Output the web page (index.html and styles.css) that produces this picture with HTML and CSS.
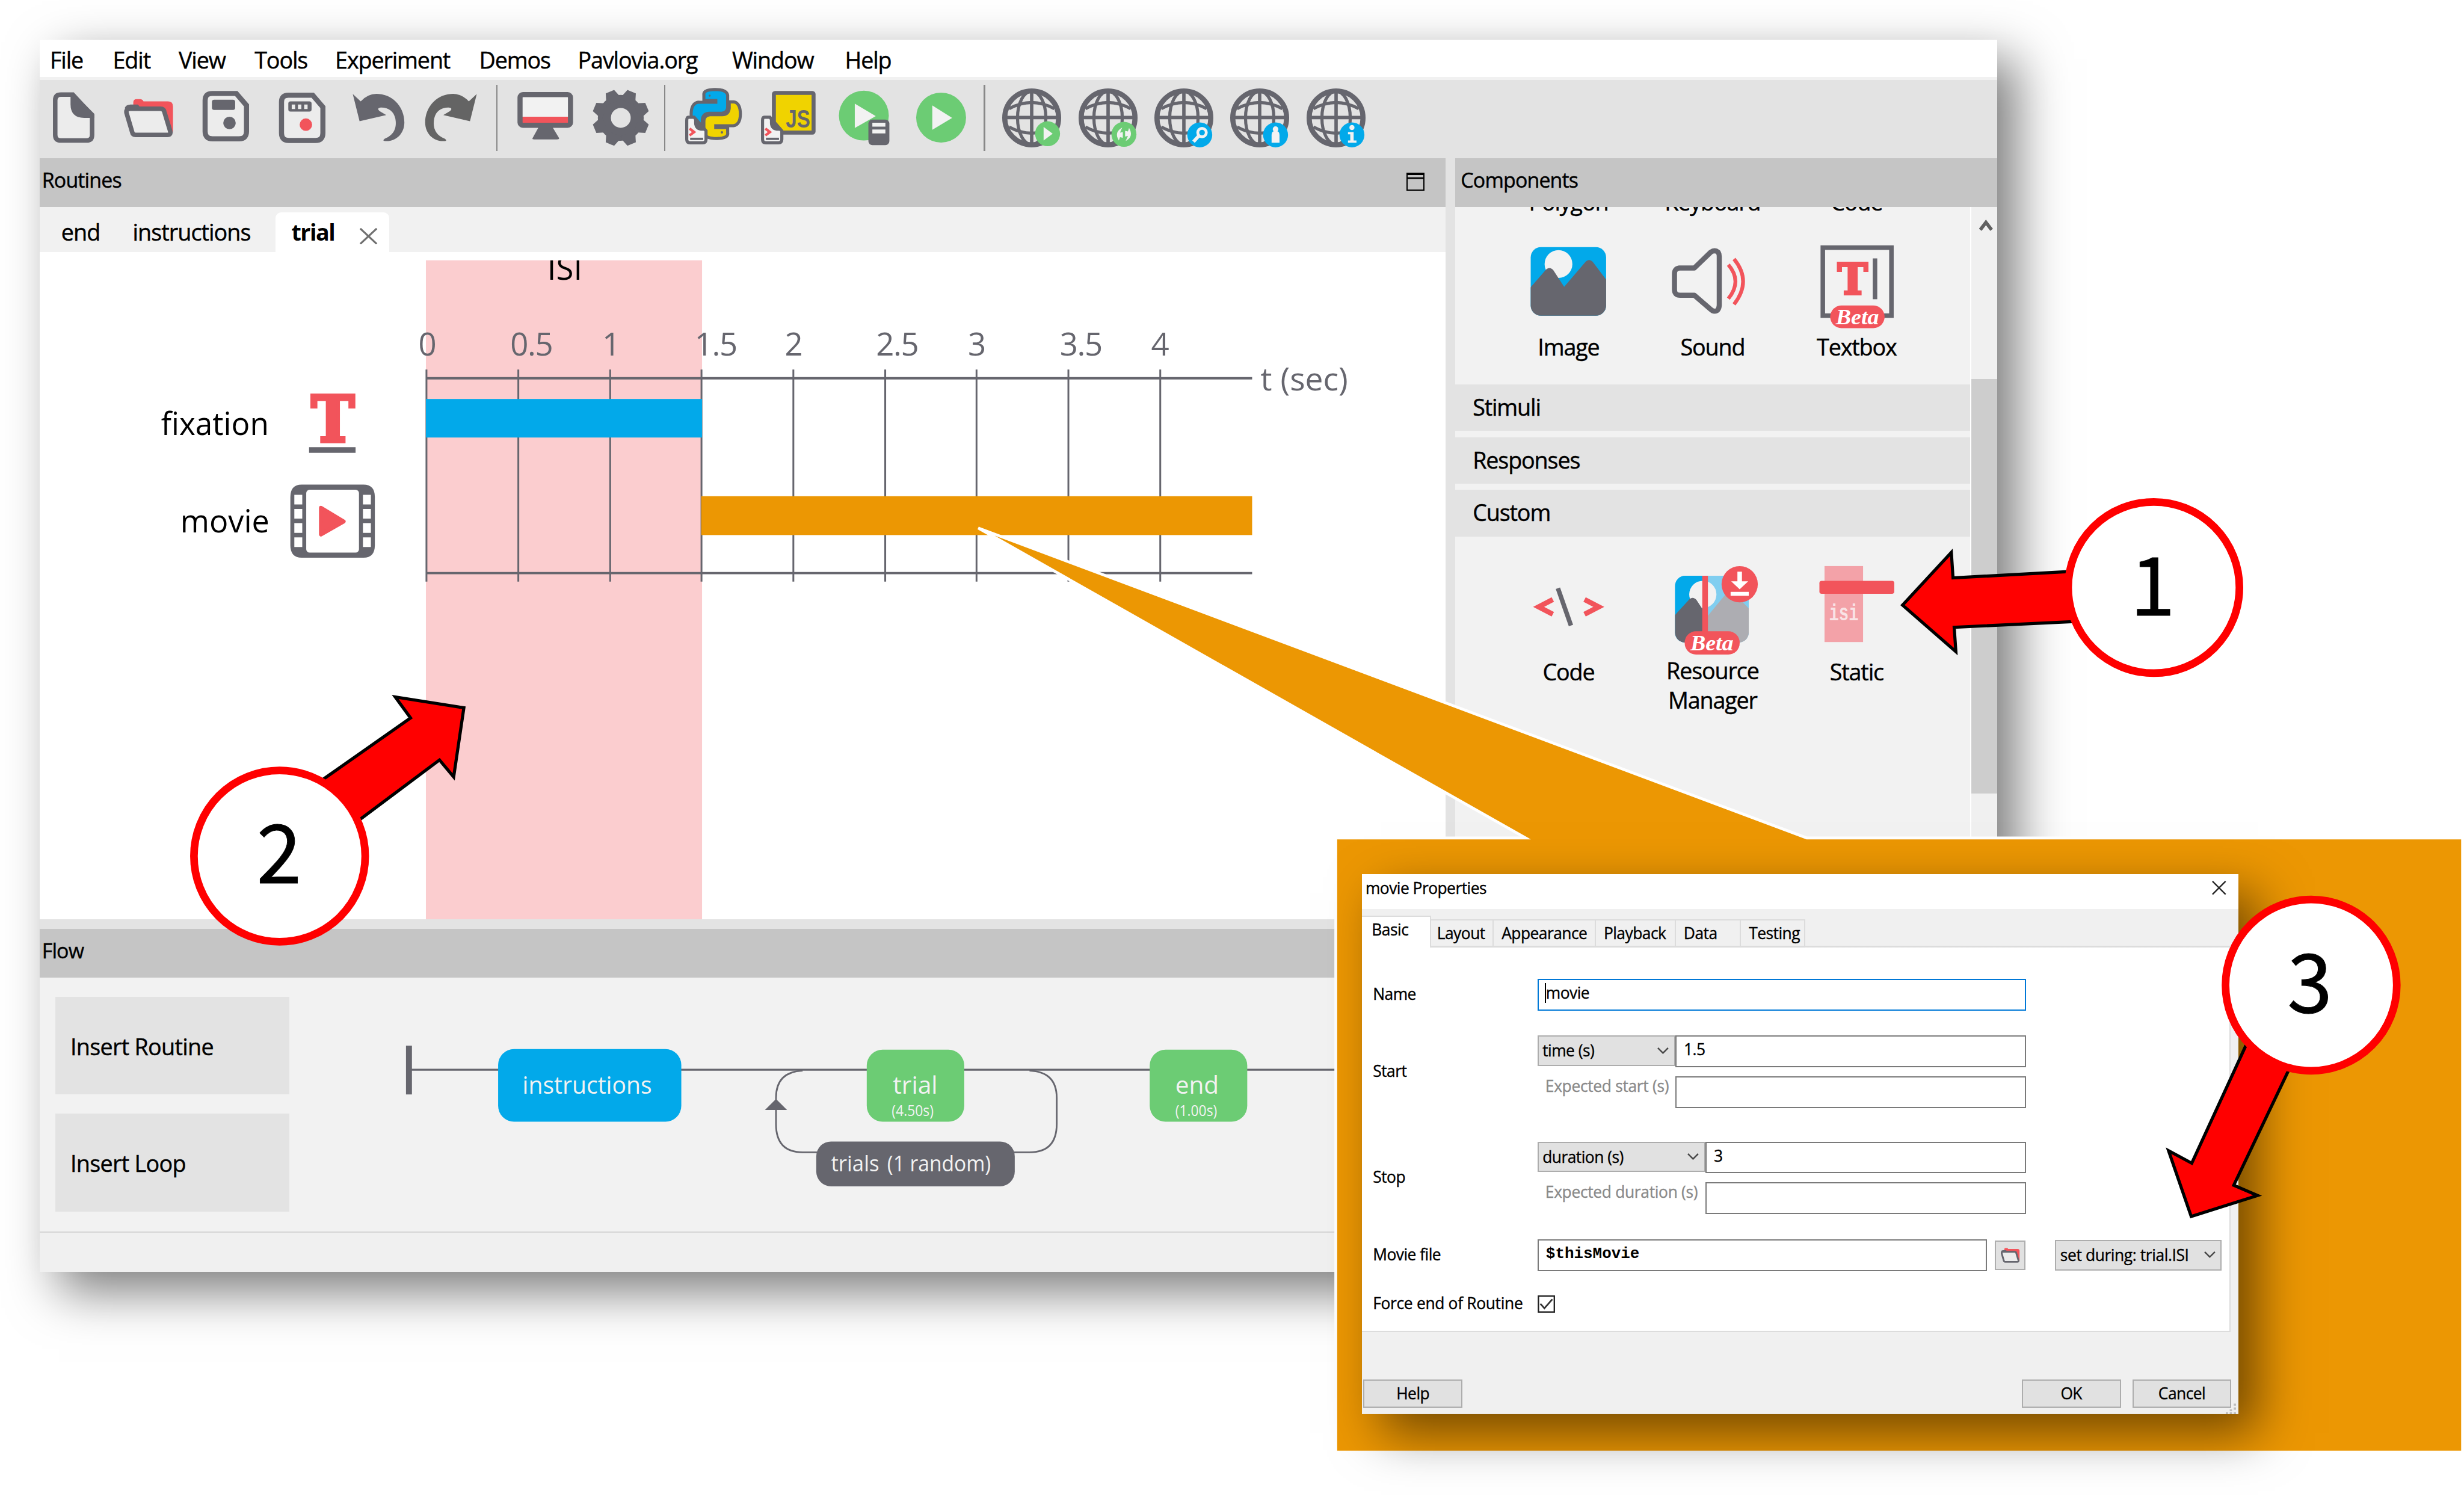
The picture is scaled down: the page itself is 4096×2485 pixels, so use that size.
FILE: index.html
```html
<!DOCTYPE html>
<html lang="en">
<head>
<meta charset="utf-8">
<title>Builder - static period</title>
<link rel="stylesheet" href="styles.css">
</head>
<body>
<svg class="defs" width="0" height="0" aria-hidden="true">
  <defs>
    <path id="snake" d="M14.25.18l.9.2.73.26.59.3.45.32.34.34.25.34.16.33.1.3.04.26.02.2-.01.13V8.5l-.05.63-.13.55-.21.46-.26.38-.3.31-.33.25-.35.19-.35.14-.33.1-.3.07-.26.04-.21.02H8.77l-.69.05-.59.14-.5.22-.41.27-.33.32-.27.35-.2.36-.15.37-.1.35-.07.32-.04.27-.02.21v3.06H3.17l-.21-.03-.28-.07-.32-.12-.35-.18-.36-.26-.36-.36-.35-.46-.32-.59-.28-.73-.21-.88-.14-1.05-.05-1.23.06-1.22.16-1.04.24-.87.32-.71.36-.57.4-.44.42-.33.42-.24.4-.16.36-.1.32-.05.24-.01h.16l.06.01h8.16v-.83H6.18l-.01-2.75-.02-.37.05-.34.11-.31.17-.28.25-.26.31-.23.38-.2.44-.18.51-.15.58-.12.64-.1.71-.06.77-.04.84-.02 1.27.05z"/>
    <g id="script-doc">
      <path d="M10 53H20L41 77V92Q41 98 35 98H13Q7 98 7 92V59Q7 53 10 53Z" fill="#f2f2f2" stroke="#66666e" stroke-width="5.500"/>
      <path d="M20 52L43 76Q20 80 20 62Z" fill="#66666e"/>
      <path d="M12 73L20 79L12 85" fill="none" stroke="#f2545b" stroke-width="4.500"/>
      <path d="M13 91H36" stroke="#66666e" stroke-width="4"/>
    </g>
    <g id="globe" fill="none" stroke="#66666e">
      <circle cx="52" cy="54" r="47.500" stroke-width="9"/>
      <ellipse cx="52" cy="54" rx="25" ry="47" stroke-width="5.500"/>
      <path d="M52 8V100M5 53.500H99" stroke-width="6"/>
      <path d="M12 38Q52 16 92 38M12 70Q52 92 92 70" stroke-width="5.500"/>
    </g>
    <g id="folder">
      <path d="M25 40V27Q25 21 31 21H37Q41 21 43 25H86Q95 25 95 34V80L80 50Z" fill="#f2545b"/>
      <path d="M19 38H73Q79 38 80 44L90 77Q92 84 85 84H29Q24 84 23 79L13 45Q12 38 19 38Z" fill="#ececec" stroke="#66666e" stroke-width="8"/>
      <path d="M12 38Q14 33 20 33H32L36 38H74" fill="none" stroke="#66666e" stroke-width="5"/>
    </g>
    <g id="tooth"><path d="M-15-30L-8-50H8L15-30Z"/></g>
  </defs>
</svg>

<div class="stage">
  <main class="builder">
    <nav class="menubar">
      <span>File</span><span>Edit</span><span>View</span><span>Tools</span><span>Experiment</span><span>Demos</span><span>Pavlovia.org</span><span>Window</span><span>Help</span>
    </nav>
    <div class="toolbar">
      <svg class="tool" viewBox="0 0 108 108"><path d="M31 13H52L86 50V84Q86 94 76 94H31Q21 94 21 84V23Q21 13 31 13Z" fill="#ececec" stroke="#66666e" stroke-width="8"/><path d="M48 11H54L90 47V54H72Q48 54 48 30Z" fill="#66666e"/></svg>
      <svg class="tool" viewBox="0 0 108 108"><use href="#folder"/></svg>
      <svg class="tool" viewBox="0 0 108 108"><path d="M30 11H73L91 32V78Q91 91 78 91H31Q18 91 18 78V23Q18 11 30 11Z" fill="#ececec" stroke="#66666e" stroke-width="9"/><rect x="30" y="22" width="41" height="18" rx="4" fill="#66666e"/><circle cx="61" cy="63" r="11" fill="#66666e"/></svg>
      <svg class="tool" viewBox="0 0 108 108"><path d="M30 14H73L91 35V81Q91 94 78 94H31Q18 94 18 81V26Q18 14 30 14Z" fill="#ececec" stroke="#66666e" stroke-width="9"/><rect x="30" y="25" width="41" height="18" rx="4" fill="#66666e"/><path d="M36 34.500H42M47 34.500H53M58 34.500H64" stroke="#ececec" stroke-width="8"/><circle cx="61" cy="66" r="11" fill="#f2545b"/></svg>
      <svg class="tool" viewBox="0 0 108 108"><path d="M10 12L24 25Q38 10 56 12C84 14 101 38 101 62C101 82 86 96 68 95Q61 95 66 91C84 84 88 70 85 55C82 42 72 35 58 36Q52 37 57 42L69 49L22 60Z" fill="#66666e"/></svg>
      <svg class="tool" viewBox="0 0 108 108"><g transform="translate(105) scale(-1 1)"><path d="M10 12L24 25Q38 10 56 12C84 14 101 38 101 62C101 82 86 96 68 95Q61 95 66 91C84 84 88 70 85 55C82 42 72 35 58 36Q52 37 57 42L69 49L22 60Z" fill="#646464"/></g></svg>
      <span class="rule"></span>
      <svg class="tool" viewBox="0 0 108 108"><rect x="9" y="13" width="89" height="54" rx="5" fill="#f2f2f2"/><rect x="12" y="52" width="83" height="12" fill="#f2545b"/><rect x="9" y="13" width="89" height="54" rx="5" fill="none" stroke="#66666e" stroke-width="9"/><path d="M42 70H66L78 90Q78 92 74 92H34Q30 92 31 90Z" fill="#66666e"/></svg>
      <svg class="tool" viewBox="0 0 108 108"><g transform="translate(53 54)" fill="#66666e"><circle r="29" fill="none" stroke="#66666e" stroke-width="23"/><use href="#tooth" transform="rotate(22.500)"/><use href="#tooth" transform="rotate(67.500)"/><use href="#tooth" transform="rotate(112.500)"/><use href="#tooth" transform="rotate(157.500)"/><use href="#tooth" transform="rotate(202.500)"/><use href="#tooth" transform="rotate(247.500)"/><use href="#tooth" transform="rotate(292.500)"/><use href="#tooth" transform="rotate(337.500)"/></g></svg>
      <span class="rule"></span>
      <svg class="tool" viewBox="0 0 108 108"><g transform="translate(15 4) scale(3.600)" stroke="#66666e" stroke-width="1.500"><use href="#snake" fill="#f0d300" transform="rotate(180 12 12)"/><use href="#snake" fill="#02a9ea"/><path d="M8 6H12.500M16 18H11.500" stroke-width="1"/><circle cx="9" cy="3" r=".5" fill="#66666e" stroke="none"/><circle cx="15" cy="21" r=".6" fill="#66666e" stroke="none"/></g><use href="#script-doc"/></svg>
      <svg class="tool" viewBox="0 0 108 108"><rect x="27" y="10" width="70" height="70" rx="2" fill="#f0d300" stroke="#66666e" stroke-width="7"/><text x="48" y="71" class="js" textLength="43" lengthAdjust="spacingAndGlyphs">JS</text><use href="#script-doc"/></svg>
      <svg class="tool" viewBox="0 0 108 108"><circle cx="52" cy="50" r="44" fill="#6ccc74"/><path d="M36 29L73 51L36 72Z" fill="#f2f2f2"/><rect x="60" y="57" width="37" height="45" rx="7" fill="#66666e"/><path d="M67 66H90M67 78H90" stroke="#f2f2f2" stroke-width="7"/></svg>
      <svg class="tool" viewBox="0 0 108 108"><circle cx="53.500" cy="53.500" r="44" fill="#6ccc74"/><path d="M38 32L73 54L38 75Z" fill="#f2f2f2"/></svg>
      <span class="rule"></span>
      <svg class="tool" viewBox="0 0 108 108"><use href="#globe"/><circle cx="80" cy="82" r="22" fill="#6ccc74"/><path d="M73 70L89 82L73 94Z" fill="#f2f2f2"/></svg>
      <svg class="tool" viewBox="0 0 108 108"><use href="#globe"/><circle cx="80" cy="83" r="22" fill="#6ccc74"/><path d="M77 71Q62 79 71 94L73 88L78 89V79L73 80ZM83 95Q98 87 89 72L87 78L82 77V87L87 86Z" fill="#f2f2f2"/></svg>
      <svg class="tool" viewBox="0 0 108 108"><use href="#globe"/><circle cx="80" cy="84" r="22" fill="#02a9ea"/><circle cx="84" cy="80" r="7.500" fill="none" stroke="#f2f2f2" stroke-width="5"/><path d="M79 85L69 96" stroke="#f2f2f2" stroke-width="6"/></svg>
      <svg class="tool" viewBox="0 0 108 108"><use href="#globe"/><circle cx="80" cy="84" r="22" fill="#02a9ea"/><circle cx="80" cy="74" r="5" fill="#f2f2f2"/><path d="M73 98V84Q73 77 80 77T87 84V98Z" fill="#f2f2f2"/></svg>
      <svg class="tool" viewBox="0 0 108 108"><use href="#globe"/><circle cx="80" cy="84" r="22" fill="#02a9ea"/><circle cx="80" cy="71" r="4.500" fill="#f2f2f2"/><path d="M73 79H83V94H88V98H73V94H77V83H73Z" fill="#f2f2f2"/></svg>
    </div>

    <div class="workspace">
      <div class="left">
        <section class="routines">
          <header class="panel-title"><span>Routines</span><i class="maximize"></i></header>
          <div class="tabs">
            <span class="tab">end</span><span class="tab">instructions</span>
            <span class="tab active">trial<svg class="close" viewBox="0 0 34 30"><path d="M2 1L32 29M32 1L2 29" fill="none" stroke="#707070" stroke-width="3.500"/></svg></span>
          </div>
          <svg class="timeline" viewBox="70 444 2479 1177">
            <clipPath id="canvas-clip"><rect x="70" y="458.500" width="2479" height="1163"/></clipPath>
            <rect x="751" y="458.500" width="487" height="1163" fill="#fbcdcf"/>
            <g clip-path="url(#canvas-clip)"><text x="965" y="493" class="big" textLength="62" lengthAdjust="spacingAndGlyphs">ISI</text></g>
            <g class="axis">
              <path d="M752 651V1025M914 651V1025M1076 651V1025M1237 651V1025M1399 651V1025M1561 651V1025M1722 651V1025M1884 651V1025M2046 651V1025" stroke-width="3.200"/>
              <path d="M752 666.500H2208M752 1010H2208" stroke-width="4"/>
            </g>
            <rect x="751" y="703" width="487" height="68" fill="#02a9ea"/>
            <rect x="1236.500" y="874.500" width="971.500" height="68.500" fill="#ec9703"/>
            <g class="big ticks">
              <text x="753" y="626">0</text><text x="937" y="626">0.5</text><text x="1077" y="626">1</text><text x="1262" y="626">1.5</text><text x="1399" y="626">2</text><text x="1582" y="626">2.5</text><text x="1722" y="626">3</text><text x="1906" y="626">3.5</text><text x="2045" y="626">4</text>
            </g>
            <text x="2223" y="688" class="big unit" textLength="154" lengthAdjust="spacingAndGlyphs">t (sec)</text>
            <text x="284" y="767" class="big" textLength="190" lengthAdjust="spacingAndGlyphs">fixation</text>
            <text x="318" y="938" class="big" textLength="157" lengthAdjust="spacingAndGlyphs">movie</text>
            <text x="549" y="778" class="slab" font-size="111" stroke-width="6" textLength="76" lengthAdjust="spacingAndGlyphs">T</text>
            <rect x="545" y="788" width="82" height="10" fill="#66666e"/>
            <path d="M532 854H641Q661 854 661 876V961Q661 983 641 983H532Q512 983 512 961V876Q512 854 532 854Z" fill="#66666e"/>
            <rect x="540" y="863" width="93" height="111" rx="6" fill="#fff"/>
            <path d="M519 872H533V889H519ZM519 897H533V914H519ZM519 922H533V939H519ZM519 947H533V964H519ZM640 872H654V889H640ZM640 897H654V914H640ZM640 922H654V939H640ZM640 947H654V964H640Z" fill="#fff"/>
            <path d="M566 895L606 919L566 942Z" fill="#f2545b" stroke="#f2545b" stroke-width="7" stroke-linejoin="round"/>
          </svg>
        </section>
        <section class="flow">
          <header class="panel-title"><span>Flow</span></header>
          <div class="flow-body">
            <div class="flow-buttons"><button class="insert">Insert Routine</button><button class="insert">Insert Loop</button></div>
            <svg class="flow-chart" viewBox="600 1724 1900 447">
              <g fill="none" stroke="#66666e" stroke-width="3">
                <path d="M720 1886.500H2500" stroke-width="3.500"/>
                <path d="M1415 1888Q1368 1890 1368 1936V1982Q1368 2032 1415 2032H1815Q1863 2032 1863 1982V1936Q1863 1890 1815 1888"/>
              </g>
              <rect x="715.500" y="1844" width="10.500" height="86" fill="#66666e"/>
              <path d="M1368 1938L1387.500 1957.500H1348.500Z" fill="#66666e"/>
              <rect x="878" y="1850" width="323" height="128" rx="28" fill="#02a9ea"/>
              <rect x="1528" y="1851" width="172" height="127" rx="28" fill="#6ccc74"/>
              <rect x="2027" y="1851" width="172" height="127" rx="28" fill="#6ccc74"/>
              <rect x="1439" y="2013" width="350" height="79" rx="26" fill="#66666e"/>
              <g class="node">
                <text x="921" y="1929" textLength="228" lengthAdjust="spacingAndGlyphs">instructions</text>
                <text x="1574" y="1929" textLength="79" lengthAdjust="spacingAndGlyphs">trial</text>
                <text x="2072" y="1929" textLength="77" lengthAdjust="spacingAndGlyphs">end</text>
              </g>
              <g class="secs">
                <text x="1572" y="1968" textLength="74" lengthAdjust="spacingAndGlyphs">(4.50s)</text>
                <text x="2072" y="1968" textLength="74" lengthAdjust="spacingAndGlyphs">(1.00s)</text>
              </g>
              <g class="loop">
                <text x="1465" y="2066" textLength="85" lengthAdjust="spacingAndGlyphs">trials</text>
                <text x="1564" y="2066" textLength="183" lengthAdjust="spacingAndGlyphs">(1 random)</text>
              </g>
            </svg>
          </div>
        </section>
      </div>

      <aside class="components">
        <header class="panel-title"><span>Components</span></header>
        <div class="comp-body">
          <div class="comp-list">
            <div class="palette first">
              <span class="label cut">Polygon</span><span class="label cut">Keyboard</span><span class="label cut">Code</span>
              <div class="item"><svg class="pic" viewBox="0 0 150 150"><clipPath id="img-clip"><rect x="8" y="6" width="133" height="121" rx="18"/></clipPath><g clip-path="url(#img-clip)"><rect width="150" height="150" fill="#02a9ea"/><circle cx="57" cy="36" r="24.500" fill="#f2f2f2"/><path d="M0 86L34 47Q41 39 48 47L67 76L104 33Q111 25 118 33L150 75V150H0Z" fill="#66666e"/></g></svg><span class="label">Image</span></div>
              <div class="item"><svg class="pic" viewBox="0 0 150 150"><path d="M16 44H43L72 16Q79 11 85 16Q87 19 87 24V108Q87 116 83 119Q77 122 72 117L43 92H18Q8 92 8 82V54Q8 44 18 44Z" fill="none" stroke="#66666e" stroke-width="9" stroke-linejoin="round" transform="translate(0 -1)"/><path d="M103 37Q128 66 103 97M113 27Q145 66 113 107" fill="none" stroke="#f2545b" stroke-width="6.500"/></svg><span class="label">Sound</span></div>
              <div class="item"><svg class="pic" viewBox="0 0 150 150"><rect x="15" y="7" width="121" height="120" fill="none" stroke="#66666e" stroke-width="8"/><text x="41" y="89" class="slab" font-size="75" stroke-width="4.500" textLength="53" lengthAdjust="spacingAndGlyphs">T</text><path d="M107 26V98" stroke="#66666e" stroke-width="8"/><rect x="28" y="109" width="96" height="40" rx="20" fill="#f2545b"/><text x="38" y="142" class="beta" textLength="76" lengthAdjust="spacingAndGlyphs">Beta</text></svg><span class="label">Textbox</span></div>
            </div>
            <h2 class="category">Stimuli</h2>
            <h2 class="category">Responses</h2>
            <h2 class="category">Custom</h2>
            <div class="palette custom">
              <div class="item"><svg class="pic tall" viewBox="0 0 150 160"><path d="M47 61L22 74L47 87M103 61L128 74L103 87" fill="none" stroke="#f2545b" stroke-width="9"/><path d="M56 41L79 107" stroke="#66666e" stroke-width="8"/></svg><span class="label single">Code</span></div>
              <div class="item"><svg class="pic tall" viewBox="0 0 150 160"><clipPath id="res-clip"><rect x="9" y="19" width="130" height="118" rx="18"/></clipPath><g clip-path="url(#res-clip)"><rect width="150" height="160" fill="#80cef0"/><rect width="60" height="160" fill="#02a9ea"/><circle cx="58" cy="52" r="24" fill="#f2f2f2"/><path d="M60 98L98 52Q106 44 114 51L150 88V160H60Z" fill="#adadb2"/><path d="M0 98L33 62Q40 54 47 62L60 82V160H0Z" fill="#66666e"/><rect x="57" y="19" width="10" height="110" fill="#f2545b"/></g><circle cx="123" cy="34" r="32" fill="#f2545b"/><path d="M119 12H127V29H138L123 43L108 29H119Z" fill="#fff"/><path d="M107 51H139" stroke="#fff" stroke-width="7"/><rect x="26" y="117" width="97" height="41" rx="20" fill="#f2545b"/><text x="36" y="151" class="beta" textLength="76" lengthAdjust="spacingAndGlyphs">Beta</text></svg><span class="label">Resource<br>Manager</span></div>
              <div class="item"><svg class="pic tall" viewBox="0 0 150 160"><rect x="18" y="2" width="68" height="134" fill="#f3a2a8"/><rect x="9" y="28" width="132" height="23" rx="4" fill="#f2545b"/><text x="26" y="98" class="isi" textLength="52" lengthAdjust="spacingAndGlyphs">isi</text></svg><span class="label single">Static</span></div>
            </div>
          </div>
          <div class="scrollbar"><svg viewBox="0 0 24 20"><path d="M2 18L12 5L22 18" fill="none" stroke="#606060" stroke-width="6"/></svg><i class="thumb"></i></div>
        </div>
      </aside>
    </div>
    <footer class="status"></footer>
  </main>

  <svg class="callout" viewBox="0 0 4345 2636">
    <path d="M2355.500 1477.500H2690L1725 931L3186 1477.500H4342.500V2560.500H2355.500Z" fill="#ec9703" stroke="#fff" stroke-width="5" stroke-miterlimit="4"/>
  </svg>

  <section class="dialog">
    <header class="dlg-title"><span>movie Properties</span><svg viewBox="0 0 26 26"><path d="M1 1L25 25M25 1L1 25" stroke="#222" stroke-width="2.500"/></svg></header>
    <div class="dlg-tabs"><span class="current">Basic</span><span>Layout</span><span>Appearance</span><span>Playback</span><span>Data</span><span>Testing</span></div>
    <div class="page">
      <div class="row name"><label>Name</label><div class="field focus"><i class="caret"></i>movie</div></div>
      <div class="row start"><label>Start</label>
        <div class="stack">
          <div class="pair"><div class="combo">time (s)<svg class="chev" viewBox="0 0 20 12"><path d="M1 1L10 10L19 1"/></svg></div><div class="field">1.5</div></div>
          <div class="pair"><span class="hint">Expected start (s)</span><div class="field"></div></div>
        </div>
      </div>
      <div class="row stop"><label>Stop</label>
        <div class="stack">
          <div class="pair"><div class="combo">duration (s)<svg class="chev" viewBox="0 0 20 12"><path d="M1 1L10 10L19 1"/></svg></div><div class="field">3</div></div>
          <div class="pair"><span class="hint">Expected duration (s)</span><div class="field"></div></div>
        </div>
      </div>
      <div class="row file"><label>Movie file</label><div class="file-line"><div class="field code">$thisMovie</div><button class="browse"><svg viewBox="4 14 98 78"><use href="#folder"/></svg></button><div class="combo">set during: trial.ISI<svg class="chev" viewBox="0 0 20 12"><path d="M1 1L10 10L19 1"/></svg></div></div></div>
      <div class="row force"><label>Force end of Routine</label><svg class="check" viewBox="0 0 31 31"><rect x="1.500" y="1.500" width="28" height="28" fill="#fff" stroke="#222" stroke-width="2.500"/><path d="M5 15L12 23L26 7" fill="none" stroke="#333" stroke-width="3"/></svg></div>
    </div>
    <footer class="dlg-foot"><button>Help</button><span class="spacer"></span><button>OK</button><button>Cancel</button></footer>
    <svg class="grip" viewBox="0 0 20 18"><path d="M14 0H18V4H14ZM14 7H18V11H14ZM7 10H11V13H7ZM0 15H4V18H0ZM7 15H11V18H7ZM14 15H18V18H14Z" fill="#bdbdbd"/></svg>
  </section>

  <svg class="notes" viewBox="0 0 4345 2636">
    <g fill="#f00" stroke="#000" stroke-width="5.500" stroke-miterlimit="10">
      <path d="M3700 1005L3444 1019L3441 974L3355 1067L3449 1149L3446 1106L3700 1094Z"/>
      <path d="M540 1395L724 1266L697 1229L818 1248L800 1370L775 1340L600 1471Z"/>
      <path d="M3985 1790L3865 2051L3824 2029L3864 2145L3981 2108L3939 2090L4075 1805Z"/>
    </g>
    <g fill="#fff" stroke="#f00" stroke-width="13.500">
      <circle cx="3798" cy="1036" r="151"/><circle cx="493" cy="1509.500" r="151"/><circle cx="4075.500" cy="1737" r="151"/>
    </g>
    <g class="number"><text x="3796" y="1085">1</text><text x="492" y="1557">2</text><text x="4073" y="1785">3</text></g>
  </svg>
</div>
</body>
</html>
```
FILE: styles.css
```css
* { box-sizing: border-box; }
body { margin: 0; background: #fff; overflow: hidden; }
.defs { position: absolute; }
svg { display: block; flex: none; }
button { font: inherit; letter-spacing: inherit; color: inherit; padding: 0; margin: 0; }

/* Coordinates inside the stage are on a 4345 x 2636 canvas */
.stage {
  position: relative;
  width: 4345px;
  height: 2636px;
  zoom: 0.94269;
  overflow: hidden;
  font-family: "Open Sans", "Noto Sans", sans-serif;
  font-size: 40px;
  letter-spacing: -0.03em;
  color: #000;
  -webkit-text-stroke: 0.5px;
}
.stage svg { -webkit-text-stroke: 0; }

/* Builder window */
.builder {
  position: absolute;
  left: 70px;
  top: 70px;
  width: 3452px;
  height: 2173px;
  display: flex;
  flex-direction: column;
  background: #e3e3e3;
  box-shadow: 34px 34px 84px rgba(0, 0, 0, 0.52);
}
.menubar {
  height: 66px;
  padding: 6px 0 0 18px;
  display: grid;
  grid-template-columns: 111px 116px 134px 142px 254px 174px 272px 199px 200px;
  align-items: center;
  background: #fff;
}
.toolbar {
  height: 143px;
  border-top: 6px solid #f1f1f1;
  padding-left: 6px;
  display: flex;
  gap: 26px;
  align-items: center;
  padding-bottom: 5px;
}
.tool { width: 108px; height: 108px; }
.rule { width: 2.500px; height: 117px; margin: 0 4.500px 0 -5px; background: #888; }
.js { font: bold 45px "Liberation Sans", sans-serif; letter-spacing: 0; fill: #66666e; }

.workspace { display: grid; grid-template-columns: 2479px 956px; gap: 17px; height: 1892px; }
.left { display: flex; flex-direction: column; gap: 17px; }
.panel-title {
  height: 86px;
  padding: 0 37px 10px 4px;
  display: flex;
  justify-content: space-between;
  align-items: center;
  background: #c5c5c5;
  font-size: 36px;
  letter-spacing: -0.025em;
}
.maximize { width: 32px; height: 32px; margin-top: 6px; border: 3px solid #000; border-top-width: 5px; box-shadow: inset 0 4px 0 #c5c5c5, inset 0 7px 0 #000; }
.tabs { height: 79px; display: flex; align-items: flex-end; padding-left: 12px; background: #f1f1f1; }
.tab { height: 69px; padding-left: 26px; line-height: 69px; letter-spacing: -0.025em; }
.tab:first-child { width: 126px; }
.tab:nth-child(2) { width: 278px; }
.tab.active {
  width: 200px;
  padding-left: 28px;
  padding-right: 20px;
  display: flex;
  justify-content: space-between;
  align-items: center;
  background: #fff;
  border-radius: 10px 10px 0 0;
  font-weight: bold;
  letter-spacing: -0.04em;
  -webkit-text-stroke: 0;
}
.close { width: 33px; height: 29px; margin-top: 14px; }
.timeline { width: 2479px; height: 1177px; background: #fff; }
.axis { fill: none; stroke: #66666e; }
.big { font-size: 56px; letter-spacing: 0; }
.ticks { fill: #66666e; text-anchor: middle; letter-spacing: -1.500px; }
.unit { fill: #66666e; }
.slab { font-family: "DejaVu Serif", serif; font-weight: bold; letter-spacing: 0; fill: #f2545b; stroke: #f2545b; }

.flow-body { height: 447px; display: flex; background: #f2f2f2; }
.flow-buttons { display: flex; flex-direction: column; gap: 34px; padding: 34px 90px 0 28px; }
.insert { width: 412px; height: 172px; border: 0; padding: 2px 0 0 26px; text-align: left; background: #e3e3e3; font-size: 40px; letter-spacing: -0.018em; }
.flow-chart { width: 1900px; height: 447px; }
.node { font-size: 42px; letter-spacing: 0; fill: #f2f2f2; }
.secs { font-size: 27px; letter-spacing: 0; fill: #f2f2f2; }
.loop { font-size: 38px; letter-spacing: 0; fill: #f2f2f2; }
.status { height: 72px; border-top: 3px solid #d5d5d5; background: #f0f0f0; }

/* Components panel */
.components .panel-title { padding-left: 10px; }
.comp-body { display: grid; grid-template-columns: 908px 48px; height: 1806px; }
.comp-list { background: #f2f2f2; }
.palette { display: grid; grid-template-columns: repeat(3, 254px); padding-left: 73px; }
.first { height: 313px; overflow: hidden; grid-template-rows: 15px 1fr; }
.item { display: flex; flex-direction: column; align-items: center; }
.label { line-height: 52px; text-align: center; }
.cut { height: 52px; margin-top: -35px; }
.first .item { padding-top: 50px; }
.pic { width: 150px; height: 150px; overflow: visible; }
.first .label { padding-top: 6px; }
.first .cut { padding: 0; }
.tall { height: 160px; }
.single { padding-top: 3px; }
.custom .item { padding-top: 50px; }
.category { height: 82px; margin: 0 0 11px; padding-left: 31px; line-height: 81px; background: #e3e3e3; font-size: 40px; font-weight: normal; }
.category:nth-of-type(3) { margin: 0; }
.beta { font: italic bold 38px "Liberation Serif", serif; letter-spacing: 0; fill: #fff; }
.isi { font: bold 42px "Liberation Mono", monospace; letter-spacing: 0; fill: #f9e3e5; }
.scrollbar { border-left: 3px solid #fff; background: #f0f0f0; }
.scrollbar svg { width: 24px; height: 20px; margin: 22px 0 0 14px; }
.thumb { display: block; height: 731px; margin-top: 261px; background: #cdcdcd; }

.callout, .notes { position: absolute; left: 0; top: 0; width: 4345px; height: 2636px; }

/* Properties dialog */
.dialog {
  position: absolute;
  left: 2402px;
  top: 1541px;
  width: 1545px;
  height: 952px;
  background: #f0f0f0;
  box-shadow: 34px 34px 84px rgba(0, 0, 0, 0.52);
  font-size: 28px;
  letter-spacing: -0.02em;
  -webkit-text-stroke: 0.4px;
}
.dlg-title { height: 62px; padding: 0 21px 12px 6px; display: flex; justify-content: space-between; align-items: center; background: #fff; }
.dlg-title svg { width: 25px; height: 25px; }
.dlg-tabs { height: 68px; display: flex; align-items: flex-end; background: linear-gradient(#dcdcdc, #dcdcdc) 0 100% / 1531px 3px no-repeat; }
.dlg-tabs span {
  height: 50px;
  padding: 3px 0 0 14px;
  line-height: 39px;
  border: solid #dcdcdc;
  border-width: 3px 2.500px 3px 0;
}
.dlg-tabs .current { width: 122px; height: 56px; padding: 5px 0 0 17px; line-height: 36px; background: #fff; border-bottom: 0; }
.dlg-tabs span:nth-child(2) { width: 110px; padding-left: 10px; }
.dlg-tabs span:nth-child(3) { width: 180px; }
.dlg-tabs span:nth-child(4) { width: 141px; }
.dlg-tabs span:nth-child(5) { width: 115px; }
.dlg-tabs span:nth-child(6) { width: 113px; }
.page { width: 1531px; height: 678px; padding-left: 19px; background: #fff; border: solid #dcdcdc; border-width: 0 3px 3px 0; }
.row { display: grid; grid-template-columns: 290px 1fr; align-items: center; }
.row label { position: relative; top: -1.500px; }
.name { padding-top: 55px; }
.start { padding-top: 44px; }
.stop { padding-top: 59px; }
.file { padding-top: 44px; }
.force { padding-top: 38px; }
.force label { letter-spacing: -0.012em; }
.field { position: relative; height: 56px; flex: 1; padding: 0 0 0 13px; line-height: 45px; border: 2.500px solid #7a7a7a; background: #fff; }
.focus { width: 862px; border-color: #0078d7; }
.caret { position: absolute; left: 11px; top: 5px; width: 2.500px; height: 35px; background: #000; }
.stack { width: 862px; display: flex; flex-direction: column; gap: 16px; }
.pair { display: flex; }
.combo { height: 54px; padding: 0 9px 1px 7px; display: flex; justify-content: space-between; align-items: center; border: 2.500px solid #adadad; background: #e1e1e1; }
.chev { width: 20px; height: 12px; }
.chev path { fill: none; stroke: #444; stroke-width: 2.500; }
.start .combo, .start .hint { width: 243px; }
.stop .combo, .stop .hint { width: 296px; }
.hint { padding-left: 14px; line-height: 36px; color: #8a8a8a; white-space: nowrap; letter-spacing: -0.012em; }
.file-line { display: flex; align-items: center; }
.file .field { flex: none; width: 793px; height: 57px; }
.file .code { font: bold 27.500px/48px "Liberation Mono", monospace; letter-spacing: 0; -webkit-text-stroke: 0; }
.browse { width: 54px; height: 52px; margin: 0 52px 0 14px; padding: 0 5px; border: 2.500px solid #adadad; background: #e1e1e1; }
.browse svg { width: 38px; height: 30px; margin: auto; }
.file .combo { width: 294px; height: 55px; letter-spacing: -0.015em; }
.check { width: 31px; height: 31px; }
.dlg-foot { display: flex; padding: 83px 12px 0 2px; }
.dlg-foot button { width: 175px; height: 50px; margin-left: 20px; border: 2.500px solid #adadad; background: #e1e1e1; }
.dlg-foot button:first-child { margin-left: 0; }
.spacer { flex: 1; }
.grip { position: absolute; right: 2px; bottom: 0; width: 20px; height: 18px; }

.number { font: 143px "Noto Sans CJK JP", sans-serif; letter-spacing: 0; text-anchor: middle; stroke: #000; stroke-width: 1; }
```
